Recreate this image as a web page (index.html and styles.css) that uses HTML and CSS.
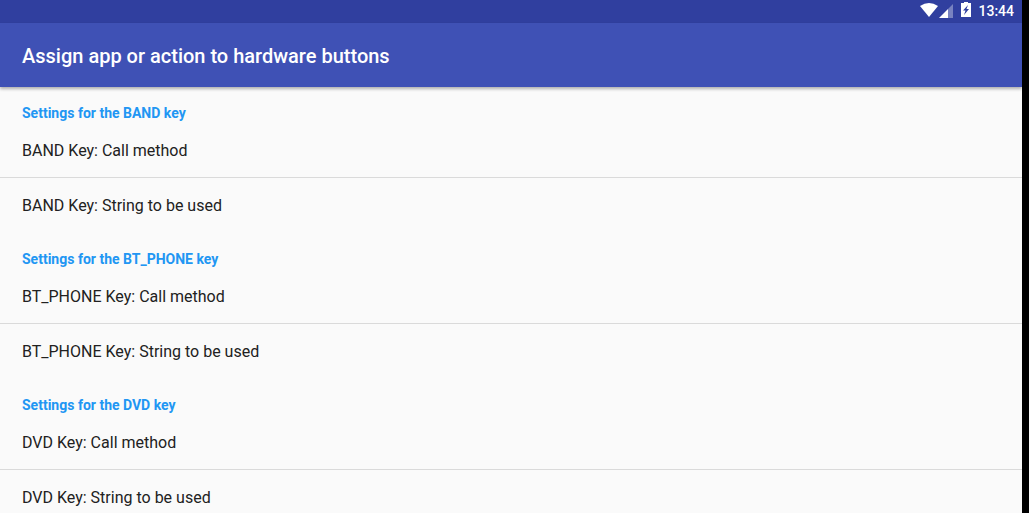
FILE: index.html
```html
<!DOCTYPE html>
<html lang="en">
<head>
<meta charset="utf-8">
<title>Assign app or action to hardware buttons</title>
<link rel="stylesheet" href="styles.css">
</head>
<body>
<div class="screen">
  <div class="status-bar">
    <svg class="icon-wifi" width="18" height="14" viewBox="0 0 18 14" aria-hidden="true"><path d="M0 3Q9 -3 18 3L9 14Z" fill="#fff"/></svg>
    <svg class="icon-signal" width="14" height="14" viewBox="0 0 14 14" aria-hidden="true"><path d="M9 5L14 0V14H9Z" fill="#fff" fill-opacity=".35"/><path d="M0 14L9 5V14Z" fill="#fff"/></svg>
    <svg class="icon-battery" width="10" height="15" viewBox="0 0 10 15" aria-hidden="true"><path fill-rule="evenodd" d="M3 0H7V1H10V15H0V1H3ZM7 3L2 8.500H4.500L3 13L8 7H5.500Z" fill="#fff"/></svg>
    <time class="clock">13:44</time>
  </div>
  <header class="app-bar"><h1 class="title">Assign app or action to hardware buttons</h1></header>
  <main class="settings">
    <section class="group">
      <h2 class="group-title">Settings for the BAND key</h2>
      <button class="row" type="button">BAND Key: Call method</button>
      <button class="row" type="button">BAND Key: String to be used</button>
    </section>
    <section class="group">
      <h2 class="group-title">Settings for the BT_PHONE key</h2>
      <button class="row" type="button">BT_PHONE Key: Call method</button>
      <button class="row" type="button">BT_PHONE Key: String to be used</button>
    </section>
    <section class="group">
      <h2 class="group-title">Settings for the DVD key</h2>
      <button class="row" type="button">DVD Key: Call method</button>
      <button class="row" type="button">DVD Key: String to be used</button>
    </section>
  </main>
</div>
</body>
</html>
```
FILE: styles.css
```css
* { box-sizing: border-box; }
body {
  margin: 0;
  height: 100vh;
  overflow: hidden;
  background: #000;
  font-family: Roboto, sans-serif;
}
.screen {
  display: flex;
  flex-direction: column;
  height: 100%;
  margin-right: 7px;
  background: #fafafa;
}
.status-bar {
  display: flex;
  flex: none;
  align-items: flex-start;
  justify-content: flex-end;
  height: 23px;
  padding-right: 8px;
  background: #303f9f;
  color: #fff;
}
.icon-wifi { margin: 3px 1px 0 0; }
.icon-signal { margin: 4px 8px 0 0; }
.icon-battery { margin: 2px 7px 0 0; }
.clock { font-size: 14px; font-weight: 500; line-height: 22px; }
.app-bar {
  display: flex;
  flex: none;
  align-items: center;
  min-height: 64px;
  padding: 2px 22px 0;
  background: #3f51b5;
  box-shadow: 0 2px 3px rgba(0, 0, 0, .3);
}
.title { margin: 0; color: #fff; font-size: 20px; font-weight: 500; line-height: 28px; }
.settings { flex: 1; min-height: 0; overflow: hidden; }
.group-title {
  margin: 0;
  padding: 16px 22px 0;
  color: #2196f3;
  font-size: 14px;
  font-weight: 700;
  line-height: 20px;
}
.row {
  display: block;
  width: 100%;
  padding: 16px 22px 14px;
  border: 0;
  border-bottom: 1px solid #dadada;
  background: none;
  color: #212121;
  font: 400 16px/24px Roboto, sans-serif;
  text-align: left;
}
.row:last-child { padding-bottom: 15px; border-bottom: 0; }
```
